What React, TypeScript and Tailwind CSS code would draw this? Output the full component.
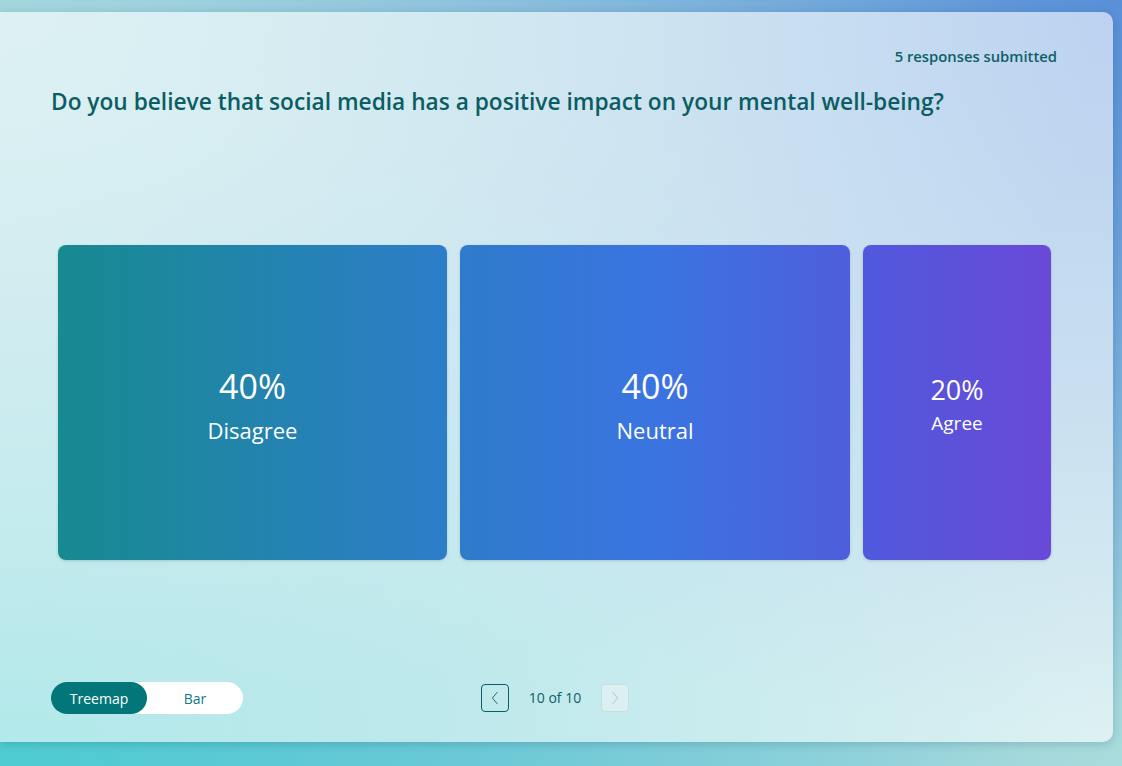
import React from 'react';

const tiles = [
  {
    pct: '40%',
    label: 'Disagree',
    w: 'w-[389px]',
    bg: 'bg-[linear-gradient(to_right,#178a90,#2d7dc9)]',
    pctCls: 'text-[34px] leading-[40px]',
    labelCls: 'text-[22px] leading-[28px] mt-[10px]',
  },
  {
    pct: '40%',
    label: 'Neutral',
    w: 'w-[390px]',
    bg: 'bg-[linear-gradient(to_right,#2f7bcb,#3a74e1_50%,#4f5edc)]',
    pctCls: 'text-[34px] leading-[40px]',
    labelCls: 'text-[22px] leading-[28px] mt-[10px]',
  },
  {
    pct: '20%',
    label: 'Agree',
    w: 'w-[188px]',
    bg: 'bg-[linear-gradient(to_right,#5059dc,#6949d8)]',
    pctCls: 'text-[27px] leading-[32px]',
    labelCls: 'text-[19px] leading-[25px] mt-[5px]',
  },
];

const Chevron = ({ dir, className }: { dir: 'left' | 'right'; className: string }) => (
  <svg viewBox="0 0 16 16" className={className} fill="none" stroke="currentColor" strokeWidth="1" strokeLinecap="round" strokeLinejoin="round">
    {dir === 'left' ? <path d="M10.5 1.5 L5 8 L10.5 14.5" /> : <path d="M5.5 1.5 L11 8 L5.5 14.5" />}
  </svg>
);

export default function App() {
  return (
    <div
      className="min-h-screen w-full pt-[12px] pr-[9px] pb-[24px] bg-[#7fb8dc] bg-[radial-gradient(at_top_left,#a3d7de,transparent_65%),radial-gradient(at_top_right,#5a90d8,transparent_65%),radial-gradient(at_bottom_left,#4ecdd1,transparent_65%),radial-gradient(at_bottom_right,#a8dcdc,transparent_65%)]"
      style={{ fontFamily: '"Open Sans", "Noto Sans", sans-serif' }}
    >
      <div className="h-[730px] w-[1113px] rounded-r-[10px] shadow-[0_2px_10px_rgba(0,40,60,0.18)] bg-[#c9e5ee] bg-[radial-gradient(at_top_left,#ddf1f3,transparent_70%),radial-gradient(at_top_right,#bdd2f1,transparent_70%),radial-gradient(at_bottom_left,#b2e9ea,transparent_70%),radial-gradient(at_bottom_right,#ddf1f2,transparent_70%)] flex flex-col pl-[51px] pr-[56px] pt-[34px] pb-[28px]">
        {/* Header */}
        <div className="flex justify-end">
          <span className="text-[14.8px] leading-[20px] font-semibold text-[#0f5f66]">5 responses submitted</span>
        </div>
        <h1 className="mt-[21px] text-[22.7px] leading-[30px] font-semibold text-[#0c5d63] whitespace-nowrap">
          Do you believe that social media has a positive impact on your mental well-being?
        </h1>

        {/* Treemap */}
        <div className="flex-1 flex items-center pl-[7px]">
          <div className="flex gap-[13px] h-[315px] mt-[5px]">
            {tiles.map((t) => (
              <div
                key={t.label}
                className={`${t.w} ${t.bg} h-full rounded-[8px] shadow-[0_1px_3px_rgba(0,0,0,0.15)] flex flex-col items-center justify-center pt-[6px] text-white`}
              >
                <span className={t.pctCls}>{t.pct}</span>
                <span className={t.labelCls}>{t.label}</span>
              </div>
            ))}
          </div>
        </div>

        {/* Footer */}
        <div className="grid grid-cols-[1fr_auto_1fr] items-center h-[32px]">
          <div className="flex">
            <div className="flex h-[32px] w-[192px] rounded-full bg-white text-[14px]">
              <button className="w-[96px] h-full rounded-full bg-[#02777a] text-white">Treemap</button>
              <button className="w-[96px] h-full text-[#0f7a80]">Bar</button>
            </div>
          </div>
          <div className="flex items-center gap-[20px] ml-[2px]">
            <button className="w-[28px] h-[28px] rounded-[4px] border border-[#0b5f66] flex items-center justify-center text-[#0b5f66]">
              <Chevron dir="left" className="w-[14px] h-[14px]" />
            </button>
            <span className="text-[14px] leading-[20px] text-[#0f5f66] whitespace-nowrap">10 of 10</span>
            <button className="w-[28px] h-[28px] rounded-[4px] border border-[#c6dfe1] bg-[#dcf0f1] flex items-center justify-center text-[#9cc5c9]">
              <Chevron dir="right" className="w-[14px] h-[14px]" />
            </button>
          </div>
          <div />
        </div>
      </div>
    </div>
  );
}
